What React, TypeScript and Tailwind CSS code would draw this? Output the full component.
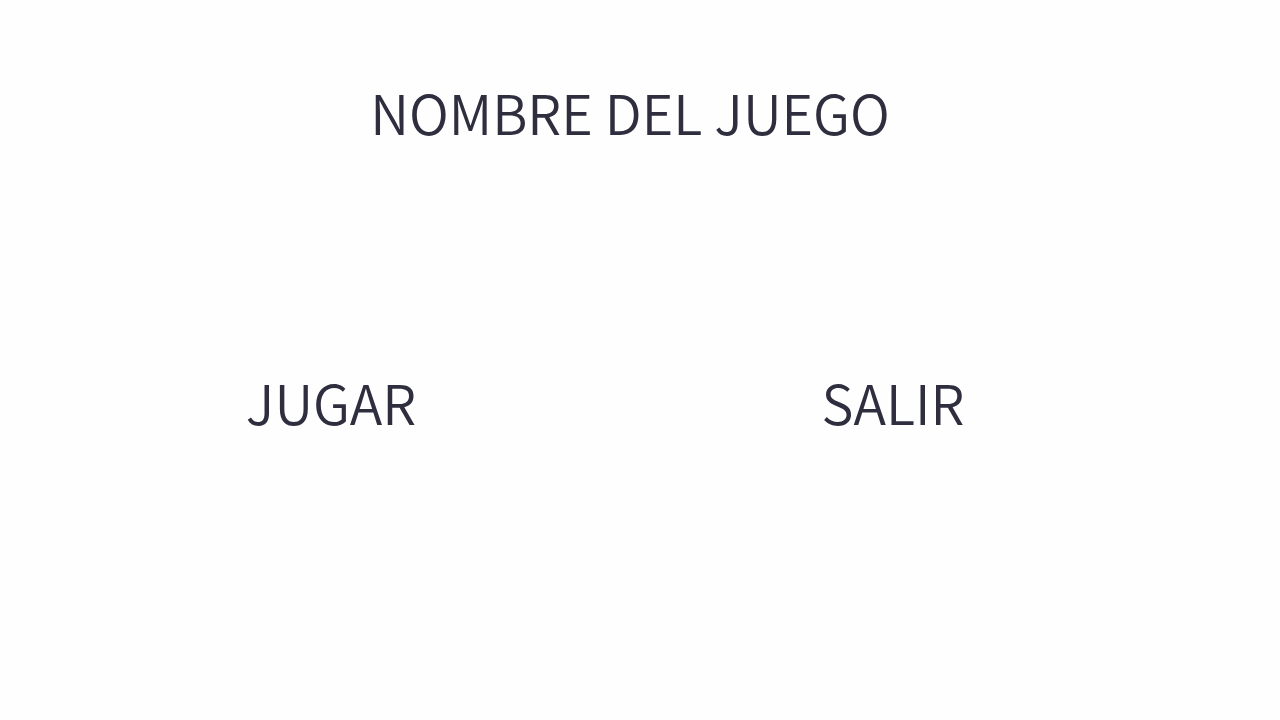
export default function App() {
  return (
    <main className="min-h-screen bg-[#fefefe] pt-[74px] font-['Noto_Sans_CJK_SC','Lato',sans-serif] text-[54px] leading-[76px] font-[350] text-[#2f2e3f]">
      <h1 className="pr-5 text-center">NOMBRE DEL JUEGO</h1>
      <nav className="mt-[214px] grid grid-cols-2 pr-[106px] pl-[50px]" aria-label="Menú principal">
        <button type="button" className="justify-self-center">JUGAR</button>
        <button type="button" className="justify-self-center">SALIR</button>
      </nav>
    </main>
  );
}
